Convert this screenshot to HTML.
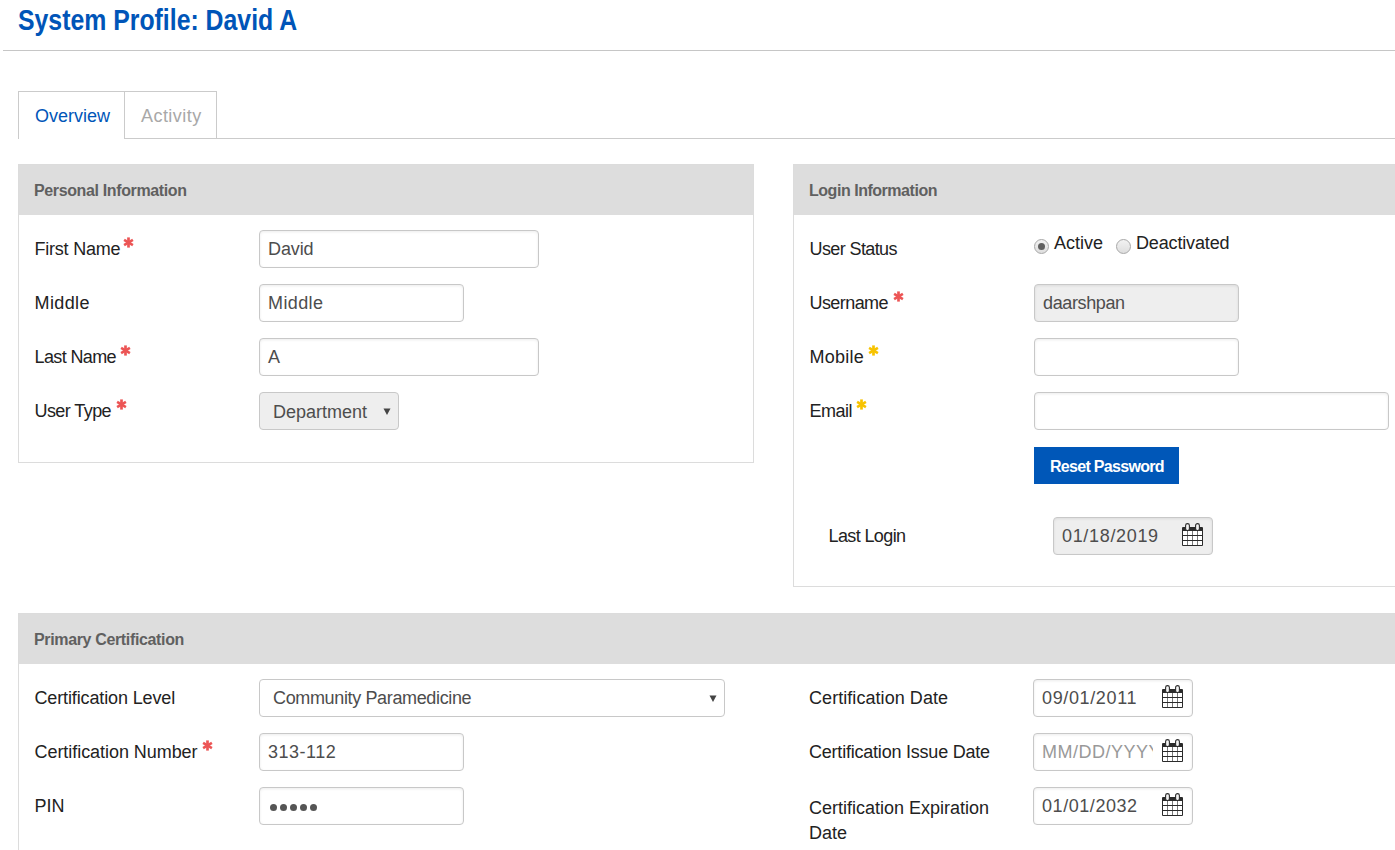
<!DOCTYPE html>
<html>
<head>
<meta charset="utf-8">
<style>
html,body{margin:0;padding:0;background:#fff;}
body{width:1395px;height:850px;overflow:hidden;position:relative;font-family:"Liberation Sans",sans-serif;color:#222;}
.a{position:absolute;}
.t{position:absolute;white-space:nowrap;font-size:17px;line-height:20px;}
.title{position:absolute;left:18px;top:3px;font-size:29px;line-height:34px;font-weight:700;color:#0055b8;transform:scaleX(0.856);transform-origin:0 0;white-space:nowrap;}
.hr{position:absolute;left:3px;top:50px;width:1392px;height:1px;background:#c6c6c6;}
.tab{position:absolute;top:91px;height:47px;border:1px solid #cbcbcb;box-sizing:border-box;}
.tabtxt{position:absolute;top:106px;font-size:18px;line-height:20px;white-space:nowrap;}
.panel{position:absolute;border:1px solid #dcdcdc;box-sizing:border-box;background:#fff;}
.ph{position:absolute;left:0;top:0;right:0;height:50px;background:#dddddd;}
.phtxt{position:absolute;left:15px;top:16px;font-size:16px;line-height:20px;font-weight:700;letter-spacing:-0.4px;color:#606060;white-space:nowrap;}
.lbl{position:absolute;white-space:nowrap;font-size:18px;line-height:20px;color:#222;}
.inp{position:absolute;height:38px;border:1px solid #c8c8c8;border-radius:4px;box-sizing:border-box;background:#fff;box-shadow:inset 0 1px 3px rgba(0,0,0,0.08);}
.inp .v{position:absolute;left:9px;top:8px;font-size:18px;line-height:20px;color:#4d4d4d;white-space:nowrap;}
.sel{position:absolute;height:38px;border:1px solid #c8c8c8;border-radius:4px;box-sizing:border-box;background:#fff;}
.sel .v{position:absolute;left:14px;top:8px;font-size:17px;line-height:20px;color:#444;white-space:nowrap;}
.arr{position:absolute;width:0;height:0;border-left:3.5px solid transparent;border-right:3.5px solid transparent;border-top:7px solid #444;}
.ast{position:absolute;width:11px;height:11px;}
.cal{position:absolute;width:21px;height:23px;}
.ro{background:#eeeeee;}
.radio{position:absolute;width:15px;height:15px;border-radius:50%;box-sizing:border-box;border:1px solid #a8a8a8;background:linear-gradient(#f2f2f2,#dedede);}
.radio.on::after{content:"";position:absolute;left:3px;top:3px;width:7px;height:7px;border-radius:50%;background:#606060;}
.btn{position:absolute;background:#0057b8;}
.btxt{position:absolute;left:16px;top:10px;font-size:16px;line-height:20px;font-weight:700;letter-spacing:-0.7px;color:#fff;white-space:nowrap;}
.dot{position:absolute;top:16px;width:7px;height:7px;border-radius:50%;background:#555;}
.clip{width:111px;overflow:hidden;}
</style>
</head>
<body>
<div class="title">System Profile: David A</div>
<div class="hr"></div>

<!-- tabs -->
<div class="a" style="left:18px;top:91px;width:107px;height:48px;border-left:1px solid #cbcbcb;border-top:1px solid #cbcbcb;border-right:1px solid #cbcbcb;box-sizing:border-box;background:#fff;"></div>
<div class="a" style="left:124px;top:91px;width:93px;height:48px;border:1px solid #cbcbcb;box-sizing:border-box;"></div>
<div class="a" style="left:216px;top:138px;width:1179px;height:1px;background:#cbcbcb;"></div>
<div class="tabtxt" style="left:35px;color:#0055b8;">Overview</div>
<div class="tabtxt" style="left:141px;color:#a8a8a8;letter-spacing:0.45px;">Activity</div>

<!-- Personal Information -->
<div class="panel" style="left:18px;top:164px;width:736px;height:299px;">
  <div class="ph"><div class="phtxt" style="letter-spacing:-0.37px">Personal Information</div></div>
</div>
<!-- Login Information -->
<div class="panel" style="left:793px;top:164px;width:620px;height:423px;">
  <div class="ph"><div class="phtxt" style="letter-spacing:-0.47px">Login Information</div></div>
</div>
<!-- Primary Certification -->
<div class="panel" style="left:18px;top:613px;width:1400px;height:260px;">
  <div class="ph"><div class="phtxt" style="letter-spacing:-0.35px">Primary Certification</div></div>
</div>

<!--CONTENT-->
<div class="lbl" style="left:34.5px;top:239px;letter-spacing:-0.222px;">First Name</div>
<svg class="ast" style="left:122.5px;top:237px" viewBox="0 0 11 11"><g stroke="#ec5555" stroke-width="2.7" stroke-linecap="butt"><line x1="5.5" y1="0.4" x2="5.5" y2="10.6"/><line x1="1.1" y1="2.95" x2="9.9" y2="8.05"/><line x1="1.1" y1="8.05" x2="9.9" y2="2.95"/></g></svg>
<div class="inp " style="left:259px;top:230px;width:280px"><div class="v" style="left:8px;top:8px;letter-spacing:-0.1px;">David</div></div>
<div class="lbl" style="left:34.5px;top:293px;letter-spacing:0.4px;">Middle</div>
<div class="inp " style="left:259px;top:284px;width:205px"><div class="v" style="left:8px;top:8px;letter-spacing:0.4px;">Middle</div></div>
<div class="lbl" style="left:34.5px;top:347px;letter-spacing:-0.625px;">Last Name</div>
<svg class="ast" style="left:119.5px;top:345px" viewBox="0 0 11 11"><g stroke="#ec5555" stroke-width="2.7" stroke-linecap="butt"><line x1="5.5" y1="0.4" x2="5.5" y2="10.6"/><line x1="1.1" y1="2.95" x2="9.9" y2="8.05"/><line x1="1.1" y1="8.05" x2="9.9" y2="2.95"/></g></svg>
<div class="inp " style="left:259px;top:338px;width:280px"><div class="v" style="left:8px;top:8px;letter-spacing:0px;">A</div></div>
<div class="lbl" style="left:34.5px;top:401px;letter-spacing:-0.575px;">User Type</div>
<svg class="ast" style="left:115.5px;top:399px" viewBox="0 0 11 11"><g stroke="#ec5555" stroke-width="2.7" stroke-linecap="butt"><line x1="5.5" y1="0.4" x2="5.5" y2="10.6"/><line x1="1.1" y1="2.95" x2="9.9" y2="8.05"/><line x1="1.1" y1="8.05" x2="9.9" y2="2.95"/></g></svg>
<div class="inp ro" style="left:259px;top:392px;width:140px;box-shadow:none"><div class="v" style="left:13px;top:9px">Department</div><svg class="a" style="left:123px;top:15px" width="8" height="8" viewBox="0 0 8 8"><polygon points="0.5,0.5 7.5,0.5 4,7" fill="#444"/></svg></div>
<div class="lbl" style="left:809.5px;top:239px;letter-spacing:-0.6px;">User Status</div>
<div class="radio on" style="left:1034px;top:239px"></div><div class="lbl" style="left:1054px;top:233px">Active</div>
<div class="radio" style="left:1116px;top:239px"></div><div class="lbl" style="left:1136px;top:233px;letter-spacing:-0.15px;">Deactivated</div>
<div class="lbl" style="left:809.5px;top:293px;letter-spacing:-0.571px;">Username</div>
<svg class="ast" style="left:892.5px;top:291px" viewBox="0 0 11 11"><g stroke="#ec5555" stroke-width="2.7" stroke-linecap="butt"><line x1="5.5" y1="0.4" x2="5.5" y2="10.6"/><line x1="1.1" y1="2.95" x2="9.9" y2="8.05"/><line x1="1.1" y1="8.05" x2="9.9" y2="2.95"/></g></svg>
<div class="inp ro" style="left:1034px;top:284px;width:205px"><div class="v" style="left:8px;top:8px;letter-spacing:-0.375px;">daarshpan</div></div>
<div class="lbl" style="left:809.5px;top:347px;letter-spacing:0.26px;">Mobile</div>
<svg class="ast" style="left:867.5px;top:345px" viewBox="0 0 11 11"><g stroke="#f7c300" stroke-width="2.7" stroke-linecap="butt"><line x1="5.5" y1="0.4" x2="5.5" y2="10.6"/><line x1="1.1" y1="2.95" x2="9.9" y2="8.05"/><line x1="1.1" y1="8.05" x2="9.9" y2="2.95"/></g></svg>
<div class="inp " style="left:1034px;top:338px;width:205px"><div class="v" style="left:7px;top:8px;letter-spacing:0px;"></div></div>
<div class="lbl" style="left:809.5px;top:401px;letter-spacing:-0.5px;">Email</div>
<svg class="ast" style="left:855.5px;top:399px" viewBox="0 0 11 11"><g stroke="#f7c300" stroke-width="2.7" stroke-linecap="butt"><line x1="5.5" y1="0.4" x2="5.5" y2="10.6"/><line x1="1.1" y1="2.95" x2="9.9" y2="8.05"/><line x1="1.1" y1="8.05" x2="9.9" y2="2.95"/></g></svg>
<div class="inp " style="left:1034px;top:392px;width:355px"><div class="v" style="left:7px;top:8px;letter-spacing:0px;"></div></div>
<div class="btn" style="left:1034px;top:447px;width:145px;height:37px"><div class="btxt">Reset Password</div></div>
<div class="lbl" style="left:828.5px;top:526px;letter-spacing:-0.611px;">Last Login</div>
<div class="inp ro" style="left:1053px;top:517px;width:160px"><div class="v" style="left:8px;top:8px;letter-spacing:0.667px;">01/18/2019</div></div>
<svg class="cal" style="left:1182px;top:523px" viewBox="0 0 21 23"><rect x="0" y="4" width="21" height="19" rx="1" fill="#2b2b2b"/><g fill="#fff"><rect x="1.0" y="8" width="4.3" height="4"/><rect x="5.9" y="8" width="4.3" height="4"/><rect x="10.8" y="8" width="4.3" height="4"/><rect x="15.7" y="8" width="4.3" height="4"/><rect x="1.0" y="13" width="4.3" height="4"/><rect x="5.9" y="13" width="4.3" height="4"/><rect x="10.8" y="13" width="4.3" height="4"/><rect x="15.7" y="13" width="4.3" height="4"/><rect x="1.0" y="18" width="4.3" height="4"/><rect x="5.9" y="18" width="4.3" height="4"/><rect x="10.8" y="18" width="4.3" height="4"/><rect x="15.7" y="18" width="4.3" height="4"/></g><rect x="3.6" y="0.6" width="3.8" height="7" rx="1.9" fill="#f4f4f4" stroke="#2b2b2b" stroke-width="1.1"/><rect x="13.6" y="0.6" width="3.8" height="7" rx="1.9" fill="#f4f4f4" stroke="#2b2b2b" stroke-width="1.1"/></svg>
<div class="lbl" style="left:34.5px;top:688px;letter-spacing:-0.133px;">Certification Level</div>
<div class="inp" style="left:259px;top:679px;width:466px;box-shadow:none"><div class="v" style="left:13px;top:8px;letter-spacing:-0.357px;">Community Paramedicine</div><svg class="a" style="left:449px;top:15px" width="8" height="8" viewBox="0 0 8 8"><polygon points="0.5,0.5 7.5,0.5 4,7" fill="#444"/></svg></div>
<div class="lbl" style="left:34.5px;top:742px;letter-spacing:-0.053px;">Certification Number</div>
<svg class="ast" style="left:201.5px;top:740px" viewBox="0 0 11 11"><g stroke="#ec5555" stroke-width="2.7" stroke-linecap="butt"><line x1="5.5" y1="0.4" x2="5.5" y2="10.6"/><line x1="1.1" y1="2.95" x2="9.9" y2="8.05"/><line x1="1.1" y1="8.05" x2="9.9" y2="2.95"/></g></svg>
<div class="inp " style="left:259px;top:733px;width:205px"><div class="v" style="left:8px;top:8px;letter-spacing:0.5px;">313-112</div></div>
<div class="lbl" style="left:34.5px;top:796px;letter-spacing:0px;">PIN</div>
<div class="inp" style="left:259px;top:787px;width:205px"><div class="dot" style="left:10px"></div><div class="dot" style="left:20px"></div><div class="dot" style="left:30px"></div><div class="dot" style="left:40px"></div><div class="dot" style="left:50px"></div></div>
<div class="lbl" style="left:809.0px;top:688px;letter-spacing:0.059px;">Certification Date</div>
<div class="inp " style="left:1033px;top:679px;width:160px"><div class="v" style="left:8px;top:8px;letter-spacing:0.633px;">09/01/2011</div></div>
<svg class="cal" style="left:1162px;top:685px" viewBox="0 0 21 23"><rect x="0" y="4" width="21" height="19" rx="1" fill="#2b2b2b"/><g fill="#fff"><rect x="1.0" y="8" width="4.3" height="4"/><rect x="5.9" y="8" width="4.3" height="4"/><rect x="10.8" y="8" width="4.3" height="4"/><rect x="15.7" y="8" width="4.3" height="4"/><rect x="1.0" y="13" width="4.3" height="4"/><rect x="5.9" y="13" width="4.3" height="4"/><rect x="10.8" y="13" width="4.3" height="4"/><rect x="15.7" y="13" width="4.3" height="4"/><rect x="1.0" y="18" width="4.3" height="4"/><rect x="5.9" y="18" width="4.3" height="4"/><rect x="10.8" y="18" width="4.3" height="4"/><rect x="15.7" y="18" width="4.3" height="4"/></g><rect x="3.6" y="0.6" width="3.8" height="7" rx="1.9" fill="#f4f4f4" stroke="#2b2b2b" stroke-width="1.1"/><rect x="13.6" y="0.6" width="3.8" height="7" rx="1.9" fill="#f4f4f4" stroke="#2b2b2b" stroke-width="1.1"/></svg>
<div class="lbl" style="left:809.0px;top:742px;letter-spacing:-0.217px;">Certification Issue Date</div>
<div class="inp" style="left:1033px;top:733px;width:160px"><div class="v clip" style="left:8px;top:8px;color:#999;letter-spacing:0.5px;">MM/DD/YYYY</div></div>
<svg class="cal" style="left:1162px;top:739px" viewBox="0 0 21 23"><rect x="0" y="4" width="21" height="19" rx="1" fill="#2b2b2b"/><g fill="#fff"><rect x="1.0" y="8" width="4.3" height="4"/><rect x="5.9" y="8" width="4.3" height="4"/><rect x="10.8" y="8" width="4.3" height="4"/><rect x="15.7" y="8" width="4.3" height="4"/><rect x="1.0" y="13" width="4.3" height="4"/><rect x="5.9" y="13" width="4.3" height="4"/><rect x="10.8" y="13" width="4.3" height="4"/><rect x="15.7" y="13" width="4.3" height="4"/><rect x="1.0" y="18" width="4.3" height="4"/><rect x="5.9" y="18" width="4.3" height="4"/><rect x="10.8" y="18" width="4.3" height="4"/><rect x="15.7" y="18" width="4.3" height="4"/></g><rect x="3.6" y="0.6" width="3.8" height="7" rx="1.9" fill="#f4f4f4" stroke="#2b2b2b" stroke-width="1.1"/><rect x="13.6" y="0.6" width="3.8" height="7" rx="1.9" fill="#f4f4f4" stroke="#2b2b2b" stroke-width="1.1"/></svg>
<div class="lbl" style="left:809px;top:796px;line-height:25px;">Certification Expiration<br>Date</div>
<div class="inp " style="left:1033px;top:787px;width:160px"><div class="v" style="left:8px;top:8px;letter-spacing:0.556px;">01/01/2032</div></div>
<svg class="cal" style="left:1162px;top:793px" viewBox="0 0 21 23"><rect x="0" y="4" width="21" height="19" rx="1" fill="#2b2b2b"/><g fill="#fff"><rect x="1.0" y="8" width="4.3" height="4"/><rect x="5.9" y="8" width="4.3" height="4"/><rect x="10.8" y="8" width="4.3" height="4"/><rect x="15.7" y="8" width="4.3" height="4"/><rect x="1.0" y="13" width="4.3" height="4"/><rect x="5.9" y="13" width="4.3" height="4"/><rect x="10.8" y="13" width="4.3" height="4"/><rect x="15.7" y="13" width="4.3" height="4"/><rect x="1.0" y="18" width="4.3" height="4"/><rect x="5.9" y="18" width="4.3" height="4"/><rect x="10.8" y="18" width="4.3" height="4"/><rect x="15.7" y="18" width="4.3" height="4"/></g><rect x="3.6" y="0.6" width="3.8" height="7" rx="1.9" fill="#f4f4f4" stroke="#2b2b2b" stroke-width="1.1"/><rect x="13.6" y="0.6" width="3.8" height="7" rx="1.9" fill="#f4f4f4" stroke="#2b2b2b" stroke-width="1.1"/></svg>
<!--/CONTENT-->
</body>
</html>
